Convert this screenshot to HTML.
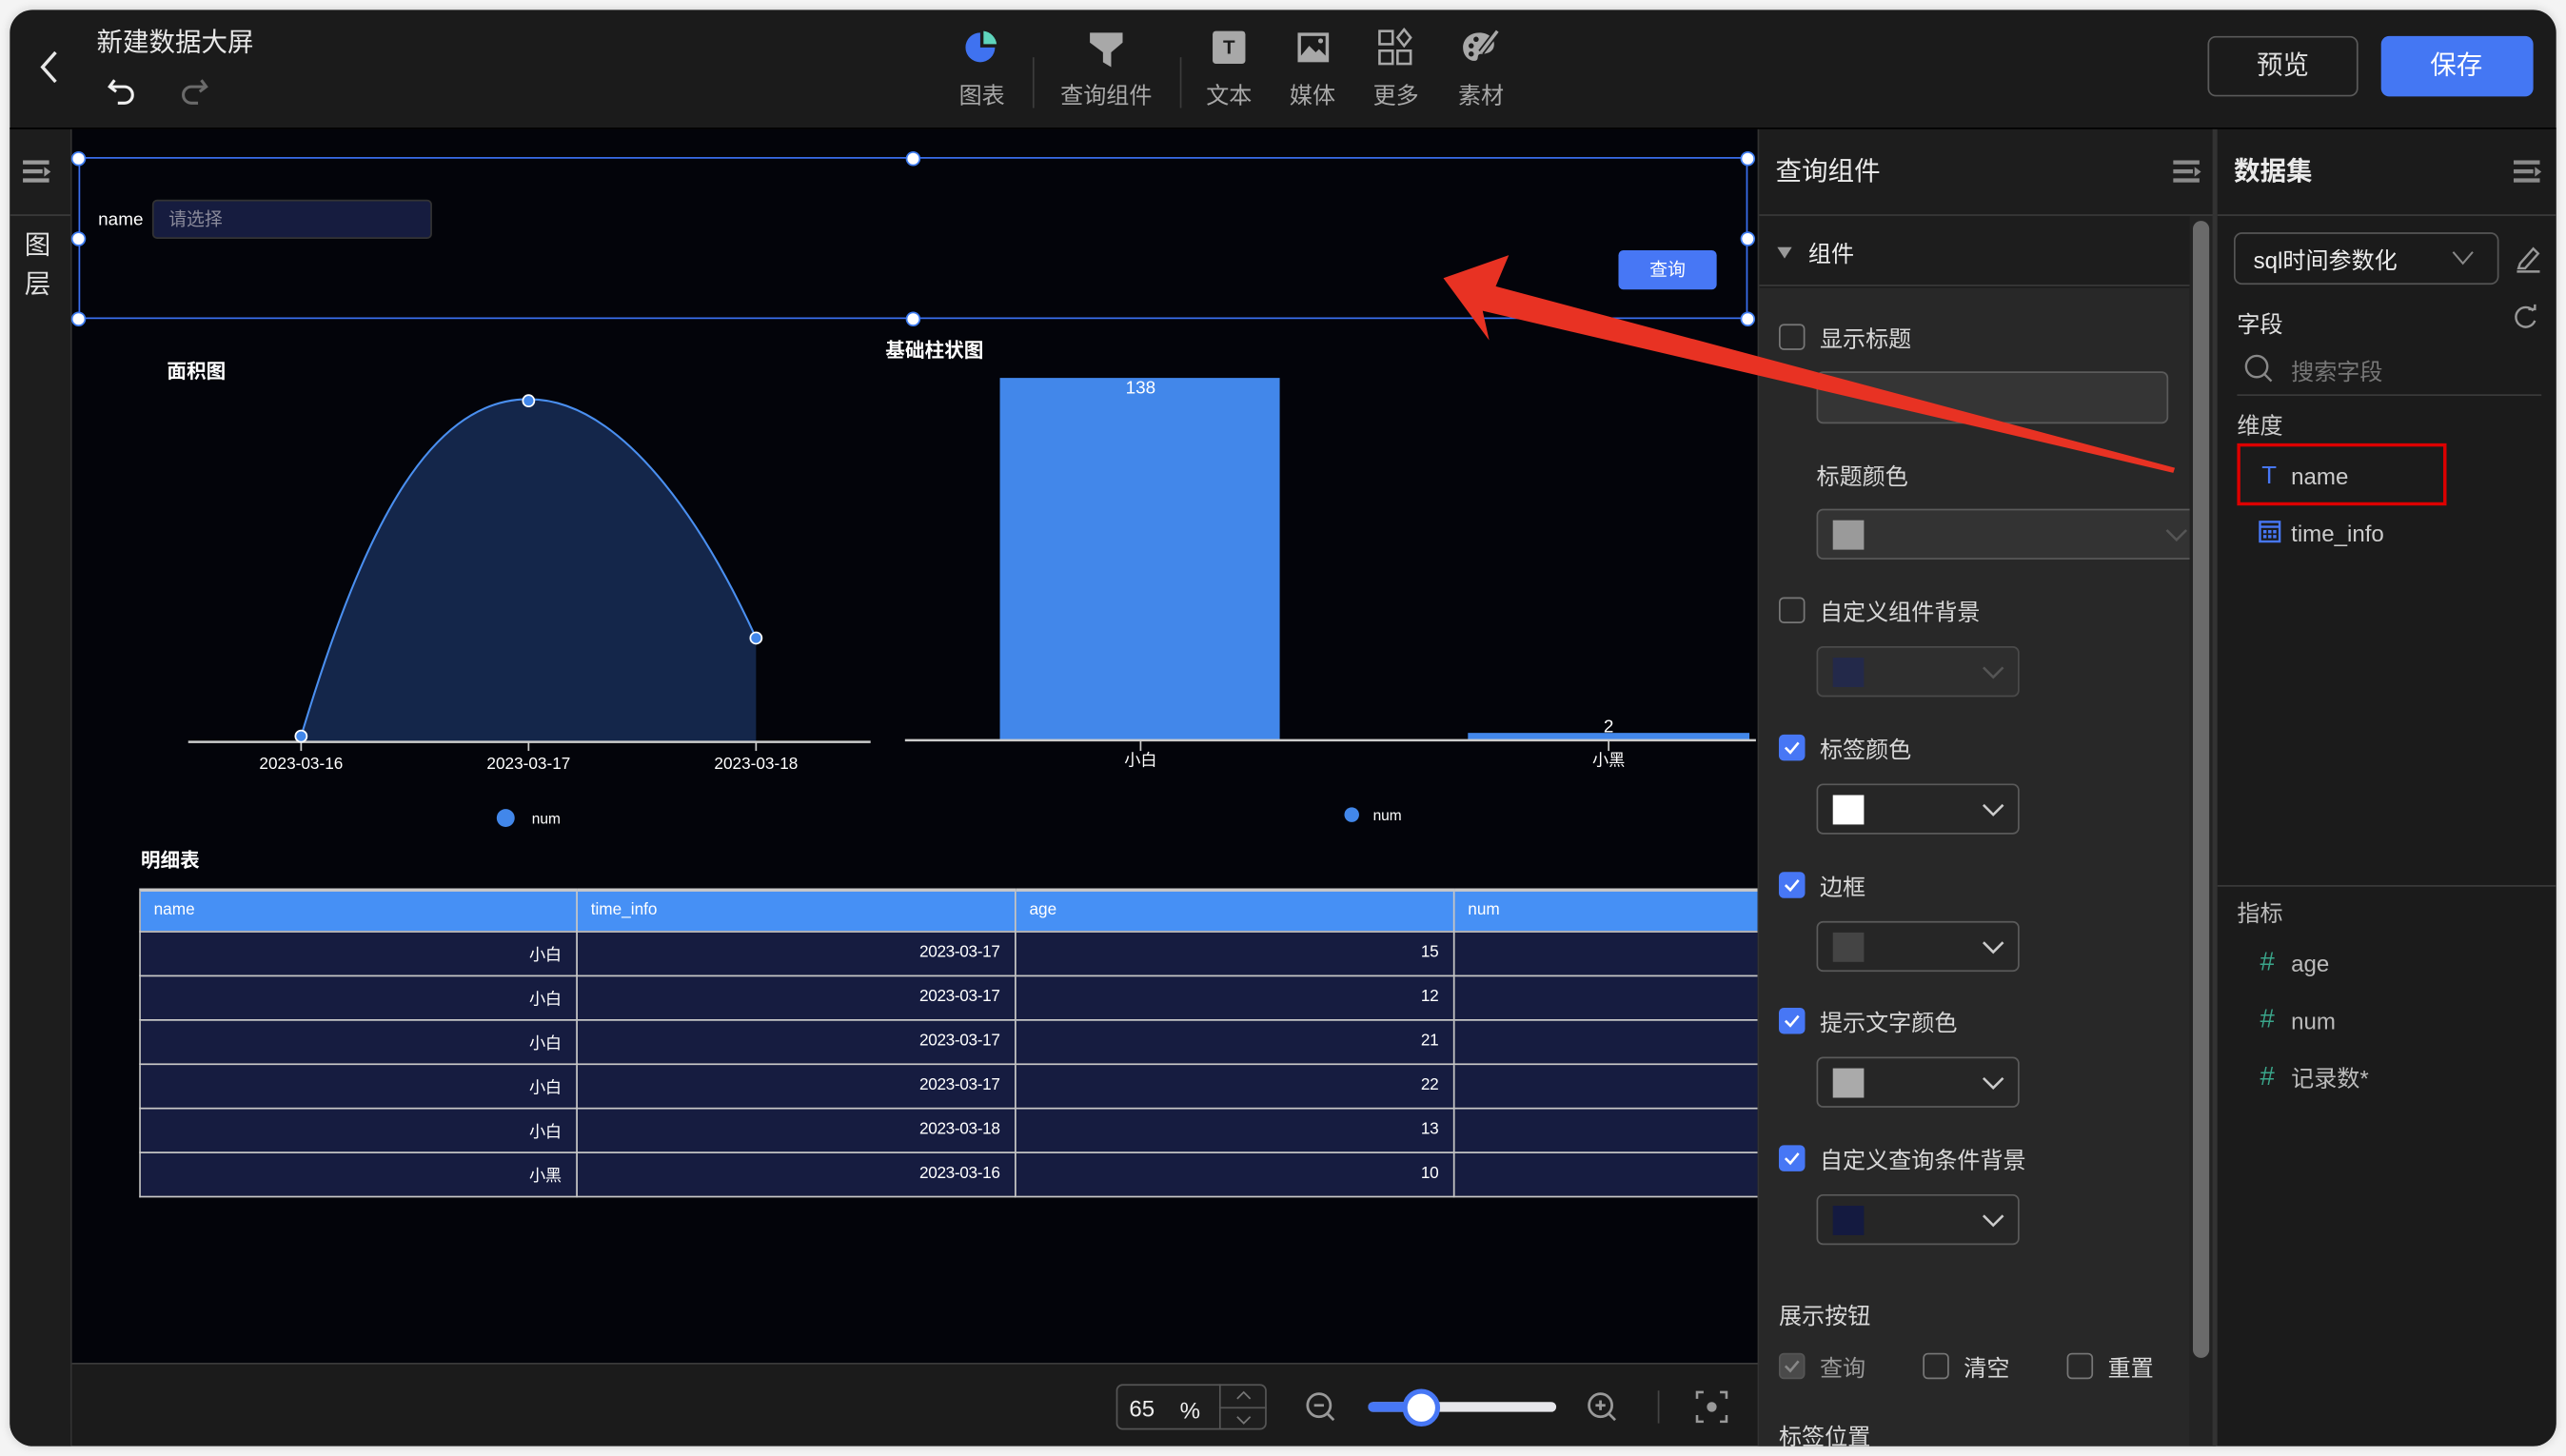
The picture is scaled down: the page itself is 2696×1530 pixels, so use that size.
<!DOCTYPE html>
<html><head><meta charset="utf-8">
<style>
*{margin:0;padding:0;box-sizing:border-box}
html,body{width:2696px;height:1530px;overflow:hidden;background:#f4f4f4}
#s{position:absolute;left:0;top:0;width:1568px;height:890px;transform:scale(1.71939,1.71910);transform-origin:0 0;font-family:"Liberation Sans","Noto Sans CJK SC",sans-serif}
.a{position:absolute}
.t{position:absolute;white-space:nowrap;line-height:1;transform:translateY(calc(-50% + 1px))}
.c{transform:translate(-50%,calc(-50% + 1px))}
.cb{position:absolute;width:16px;height:16px;border:1px solid #777;border-radius:3px}
.ck{background:#4777f5;border-color:#4777f5}
.sel{position:absolute;left:1110px;width:124px;height:31px;border:1px solid #5a5a5a;border-radius:4px;background:#262626}
.sw{position:absolute;left:9px;top:6px;width:19px;height:18px}
.lbl{font-size:14px;color:#d8d8d8}
.h{position:absolute;width:9px;height:9px;border-radius:50%;background:#fff;border:1.5px solid #3d7bf0;transform:translate(-50%,-50%)}
table{border-collapse:collapse}
td{border:1px solid #c8c8c8;height:27px;font-size:10px;color:#fff;text-align:right;padding-right:9px;background:#161c40;letter-spacing:-0.2px}
th{border:1px solid #c8c8c8;border-top:2px solid #c8c8c8;height:25px;font-size:10px;color:#fff;text-align:left;padding-left:8px;background:#4690f5;font-weight:normal}
</style></head><body>
<div id="s">
<div class="a" style="left:6px;top:6px;width:1556px;height:878px;border-radius:14px;background:#1b1b1b;overflow:hidden;box-shadow:0 0 6px rgba(0,0,0,.15)"></div>
<svg class="a" style="left:22px;top:30px" width="16" height="22"><path d="M12 2 L4 11 L12 20" stroke="#e8e8e8" stroke-width="2" fill="none"/></svg>
<div class="t" style="left:59px;top:26px;font-size:16px;color:#e8e8e8">新建数据大屏</div>
<svg class="a" style="left:65px;top:45px" width="20" height="20"><path d="M5 4 L2 8 L6 11 M2 8 H11 a5 5 0 0 1 0 10 H7" stroke="#f0f0f0" stroke-width="1.8" fill="none"/></svg>
<svg class="a" style="left:108px;top:45px" width="20" height="20"><path d="M15 4 L18 8 L14 11 M18 8 H9 a5 5 0 0 0 0 10 H13" stroke="#6a6a6a" stroke-width="1.8" fill="none"/></svg>

<svg class="a" style="left:589px;top:18px" width="22" height="22"><path d="M10 2 A9 9 0 1 0 19 11 L10 11 Z" fill="#3f72f0"/><path d="M12 1 A9 9 0 0 1 20 9 L12 9 Z" fill="#5fd4bc"/></svg>
<div class="t c" style="left:600px;top:57px;font-size:14px;color:#a8a8a8">图表</div>
<div class="a" style="left:631px;top:35px;width:1px;height:31px;background:#3c3c3c"></div>
<svg class="a" style="left:665px;top:18px" width="22" height="24"><path d="M1 2 H21 V8 L14 14 V23 L9 20 V14 L1 8Z" fill="#a8a8a8"/></svg>
<div class="t c" style="left:676px;top:57px;font-size:14px;color:#a8a8a8">查询组件</div>
<div class="a" style="left:721px;top:35px;width:1px;height:31px;background:#3c3c3c"></div>
<div class="a" style="left:741px;top:19px;width:20px;height:20px;background:#a8a8a8;border-radius:2px"></div>
<div class="t c" style="left:751px;top:28px;font-size:12px;color:#1b1b1b;font-weight:bold">T</div>
<div class="t c" style="left:751px;top:57px;font-size:14px;color:#a8a8a8">文本</div>
<svg class="a" style="left:792px;top:19px" width="21" height="20"><rect x="1" y="1" width="19" height="18" fill="#a8a8a8"/><rect x="3" y="3" width="15" height="12" fill="#1b1b1b"/><path d="M3 15 L8 9 L12 13 L14 11 L18 15Z" fill="#a8a8a8"/><circle cx="15" cy="6" r="1.5" fill="#a8a8a8"/></svg>
<div class="t c" style="left:802px;top:57px;font-size:14px;color:#a8a8a8">媒体</div>
<svg class="a" style="left:842px;top:17px" width="22" height="24"><g fill="none" stroke="#a8a8a8" stroke-width="1.5"><rect x="1" y="2" width="8" height="8"/><path d="M16 1 L20 6 L16 11 L12 6Z"/><rect x="1" y="14" width="8" height="8"/><rect x="12" y="14" width="8" height="8"/></g></svg>
<div class="t c" style="left:853px;top:57px;font-size:14px;color:#a8a8a8">更多</div>
<svg class="a" style="left:893px;top:17px" width="24" height="24"><path d="M11 3 C4 3 1 8 1 12 C1 18 6 21 9 20 C11 19 9 16 12 16 C17 16 20 14 20 10 C20 6 16 3 11 3Z" fill="#a8a8a8"/><circle cx="6" cy="11" r="1.6" fill="#1b1b1b"/><circle cx="9" cy="7" r="1.6" fill="#1b1b1b"/><circle cx="6" cy="16" r="1.6" fill="#1b1b1b"/><path d="M22 2 L12 15" stroke="#1b1b1b" stroke-width="4"/><path d="M22 2 L12 15" stroke="#a8a8a8" stroke-width="2"/></svg>
<div class="t c" style="left:905px;top:57px;font-size:14px;color:#a8a8a8">素材</div>

<div class="a" style="left:1349px;top:22px;width:92px;height:37px;border:1px solid #5a5a5a;border-radius:5px"></div>
<div class="t c" style="left:1395px;top:40px;font-size:16px;color:#e0e0e0">预览</div>
<div class="a" style="left:1455px;top:22px;width:93px;height:37px;background:#4477f3;border-radius:5px"></div>
<div class="t c" style="left:1501px;top:40px;font-size:16px;color:#fff">保存</div>

<div class="a" style="left:6px;top:78px;width:38px;height:806px;background:#1d1d1d;border-right:1px solid #333;border-bottom-left-radius:14px"></div>
<div class="a" style="left:6px;top:78px;width:1556px;height:1px;background:#000"></div>
<svg class="a" style="left:13px;top:97px" width="20" height="16"><g fill="#9a9a9a"><rect x="1" y="1" width="16" height="2.5"/><rect x="1" y="6.5" width="12" height="2.5"/><path d="M14 5 L18 8 L14 11Z"/><rect x="1" y="12" width="16" height="2.5"/></g></svg>
<div class="a" style="left:6px;top:131px;width:37px;height:1px;background:#3a3a3a"></div>
<div class="t c" style="left:23px;top:150px;font-size:16px;color:#e0e0e0">图</div>
<div class="t c" style="left:23px;top:174px;font-size:16px;color:#e0e0e0">层</div>

<div class="a" style="left:44px;top:79px;width:1030px;height:754px;background:#03040a"></div>
<div class="a" style="left:48px;top:96px;width:1020px;height:99px;border:1px solid #3a6ff0"></div>
<div class="h" style="left:48px;top:97px"></div><div class="h" style="left:558px;top:97px"></div><div class="h" style="left:1068px;top:97px"></div>
<div class="h" style="left:48px;top:146px"></div><div class="h" style="left:1068px;top:146px"></div>
<div class="h" style="left:48px;top:195px"></div><div class="h" style="left:558px;top:195px"></div><div class="h" style="left:1068px;top:195px"></div>
<div class="t" style="left:60px;top:134px;font-size:11px;color:#fff">name</div>
<div class="a" style="left:93px;top:122px;width:171px;height:24px;background:#161c3f;border:1px solid #333;border-radius:3px"></div>
<div class="t" style="left:103px;top:134px;font-size:11px;color:#8a8a9a">请选择</div>
<div class="a" style="left:989px;top:153px;width:60px;height:24px;background:#4777f5;border-radius:3px"></div>
<div class="t c" style="left:1019px;top:165px;font-size:11px;color:#fff">查询</div>

<div class="t" style="left:102px;top:226px;font-size:12px;color:#fff;font-weight:bold">面积图</div>
<svg class="a" style="left:0;top:0" width="1074" height="520">
<path d="M184 450 C220 330 260 244 323 244 C380 244 430 320 462 390 L462 453 L184 453Z" fill="#14264a"/>
<path d="M184 450 C220 330 260 244 323 244 C380 244 430 320 462 390" fill="none" stroke="#4a8ff0" stroke-width="1.2"/>
<line x1="115" y1="453.5" x2="532" y2="453.5" stroke="#ccc" stroke-width="1.5"/>
<g stroke="#ccc"><line x1="184" y1="454" x2="184" y2="459"/><line x1="323" y1="454" x2="323" y2="459"/><line x1="462" y1="454" x2="462" y2="459"/></g>
<g fill="#4287ea" stroke="#fff" stroke-width="1"><circle cx="184" cy="450" r="3.5"/><circle cx="323" cy="245" r="3.5"/><circle cx="462" cy="390" r="3.5"/></g>
<circle cx="309" cy="500" r="5.5" fill="#4287ea"/>
<rect x="611" y="231" width="171" height="221" fill="#4287ea"/>
<rect x="897" y="448" width="172" height="4" fill="#4287ea"/>
<line x1="553" y1="452.5" x2="1073" y2="452.5" stroke="#ccc" stroke-width="1.5"/>
<g stroke="#ccc"><line x1="697" y1="453" x2="697" y2="459"/><line x1="983" y1="453" x2="983" y2="459"/></g>
<circle cx="826" cy="498" r="4.5" fill="#4287ea"/>
</svg>
<div class="t c" style="left:184px;top:467px;font-size:10px;color:#fff">2023-03-16</div>
<div class="t c" style="left:323px;top:467px;font-size:10px;color:#fff">2023-03-17</div>
<div class="t c" style="left:462px;top:467px;font-size:10px;color:#fff">2023-03-18</div>
<div class="t" style="left:325px;top:500px;font-size:9px;color:#fff">num</div>
<div class="t" style="left:541px;top:213px;font-size:12px;color:#fff;font-weight:bold">基础柱状图</div>
<div class="t c" style="left:697px;top:237px;font-size:11px;color:#fff">138</div>
<div class="t c" style="left:983px;top:444px;font-size:11px;color:#fff">2</div>
<div class="t c" style="left:697px;top:465px;font-size:10px;color:#fff">小白</div>
<div class="t c" style="left:983px;top:465px;font-size:10px;color:#fff">小黑</div>
<div class="t" style="left:839px;top:498px;font-size:9px;color:#fff">num</div>

<div class="t" style="left:86px;top:525px;font-size:12px;color:#fff;font-weight:bold">明细表</div>
<div class="a" style="left:85px;top:543px;width:989px;height:190px;overflow:hidden">
<table style="width:1080px;table-layout:fixed">
<colgroup><col style="width:267px"><col style="width:268px"><col style="width:268px"><col style="width:277px"></colgroup>
<tr><th>name</th><th>time_info</th><th>age</th><th>num</th></tr>
<tr><td>小白</td><td>2023-03-17</td><td>15</td><td></td></tr>
<tr><td>小白</td><td>2023-03-17</td><td>12</td><td></td></tr>
<tr><td>小白</td><td>2023-03-17</td><td>21</td><td></td></tr>
<tr><td>小白</td><td>2023-03-17</td><td>22</td><td></td></tr>
<tr><td>小白</td><td>2023-03-18</td><td>13</td><td></td></tr>
<tr><td>小黑</td><td>2023-03-16</td><td>10</td><td></td></tr>
</table></div>

<div class="a" style="left:44px;top:833px;width:1031px;height:1px;background:#3a3a3a"></div>
<div class="a" style="left:682px;top:846px;width:92px;height:28px;border:1px solid #555;border-radius:4px;background:#1e1e1e"></div>
<div class="a" style="left:745px;top:846px;width:1px;height:28px;background:#555"></div>
<div class="a" style="left:745px;top:860px;width:29px;height:1px;background:#555"></div>
<div class="t" style="left:690px;top:860px;font-size:14px;color:#eee">65</div>
<div class="t" style="left:721px;top:861px;font-size:14px;color:#eee">%</div>
<svg class="a" style="left:746px;top:847px" width="28" height="27"><path d="M10 8 L14 4 L18 8 M10 19 L14 23 L18 19" stroke="#777" fill="none"/></svg>
<svg class="a" style="left:797px;top:850px" width="22" height="22"><circle cx="9" cy="9" r="7" stroke="#999" stroke-width="1.6" fill="none"/><path d="M6 9 H12" stroke="#999" stroke-width="1.6"/><path d="M14 14 L18 18" stroke="#999" stroke-width="1.6"/></svg>
<div class="a" style="left:836px;top:857px;width:115px;height:6px;border-radius:3px;background:#e6e6ea"></div>
<div class="a" style="left:836px;top:857px;width:32px;height:6px;border-radius:3px;background:#4777f5"></div>
<div class="a" style="left:857px;top:849px;width:23px;height:23px;border-radius:50%;background:#fff;border:3px solid #4777f5"></div>
<svg class="a" style="left:969px;top:850px" width="22" height="22"><circle cx="9" cy="9" r="7" stroke="#999" stroke-width="1.6" fill="none"/><path d="M6 9 H12 M9 6 V12" stroke="#999" stroke-width="1.6"/><path d="M14 14 L18 18" stroke="#999" stroke-width="1.6"/></svg>
<div class="a" style="left:1013px;top:850px;width:1px;height:20px;background:#444"></div>
<svg class="a" style="left:1036px;top:850px" width="20" height="20"><path d="M1 5 V1 H5 M15 1 H19 V5 M19 15 V19 H15 M5 19 H1 V15" stroke="#999" stroke-width="1.5" fill="none"/><circle cx="10" cy="10" r="3" fill="#999"/></svg>

<div class="a" style="left:1074px;top:79px;width:1px;height:805px;background:#333"></div>
<div class="a" style="left:1075px;top:79px;width:278px;height:52px;background:#1d1d1d"></div>
<div class="t" style="left:1085px;top:105px;font-size:16px;color:#eaeaea">查询组件</div>
<svg class="a" style="left:1327px;top:97px" width="20" height="16"><g fill="#8a8a8a"><rect x="1" y="1" width="16" height="2.5"/><rect x="1" y="6.5" width="12" height="2.5"/><path d="M14 5 L18 8 L14 11Z"/><rect x="1" y="12" width="16" height="2.5"/></g></svg>
<div class="a" style="left:1075px;top:131px;width:280px;height:1px;background:#3a3a3a"></div>
<div class="a" style="left:1075px;top:132px;width:263px;height:43px;background:#1d1d1d;border-bottom:1px solid #3a3a3a"></div>
<svg class="a" style="left:1086px;top:151px" width="10" height="8"><path d="M0 0 H9 L4.5 7Z" fill="#999"/></svg>
<div class="t" style="left:1105px;top:154px;font-size:14px;color:#eee">组件</div>
<div class="a" style="left:1075px;top:176px;width:263px;height:708px;background:#282828"></div>

<div class="cb" style="left:1087px;top:198px"></div>
<div class="t lbl" style="left:1112px;top:206px">显示标题</div>
<div class="a" style="left:1110px;top:227px;width:215px;height:32px;background:#353535;border:1px solid #5a5a5a;border-radius:4px"></div>
<div class="t lbl" style="left:1110px;top:290px">标题颜色</div>
<div class="sel" style="top:311px;width:240px;background:#333"><div class="sw" style="background:#9a9a9a"></div><svg class="a" style="left:212px;top:10px" width="14" height="10"><path d="M1 2 L7 8 L13 2" stroke="#555" fill="none" stroke-width="1.5"/></svg></div>
<div class="a" style="left:1338px;top:132px;width:16px;height:752px;background:#232323"></div>
<div class="a" style="left:1340px;top:135px;width:10px;height:695px;background:#6a6a6a;border-radius:5px"></div>
<div class="a" style="left:1352px;top:79px;width:3px;height:805px;background:#333"></div>
<div class="cb" style="left:1087px;top:365px"></div>
<div class="t lbl" style="left:1112px;top:373px">自定义组件背景</div>
<div class="sel" style="top:395px;background:#2e2e2e;border-color:#4a4a4a"><div class="sw" style="background:#23294a"></div><svg class="a" style="left:100px;top:10px" width="14" height="10"><path d="M1 2 L7 8 L13 2" stroke="#555" fill="none" stroke-width="1.5"/></svg></div>
<div class="cb ck" style="left:1087px;top:449px"></div>
<svg class="a" style="left:1087px;top:449px" width="16" height="16"><path d="M4 8 L7 11 L12 5" stroke="#fff" stroke-width="1.5" fill="none"/></svg>
<div class="t lbl" style="left:1112px;top:457px">标签颜色</div>
<div class="sel" style="top:479px"><div class="sw" style="background:#fff"></div><svg class="a" style="left:100px;top:10px" width="14" height="10"><path d="M1 2 L7 8 L13 2" stroke="#ccc" fill="none" stroke-width="1.5"/></svg></div>
<div class="cb ck" style="left:1087px;top:533px"></div>
<svg class="a" style="left:1087px;top:533px" width="16" height="16"><path d="M4 8 L7 11 L12 5" stroke="#fff" stroke-width="1.5" fill="none"/></svg>
<div class="t lbl" style="left:1112px;top:541px">边框</div>
<div class="sel" style="top:563px"><div class="sw" style="background:#444"></div><svg class="a" style="left:100px;top:10px" width="14" height="10"><path d="M1 2 L7 8 L13 2" stroke="#ccc" fill="none" stroke-width="1.5"/></svg></div>
<div class="cb ck" style="left:1087px;top:616px"></div>
<svg class="a" style="left:1087px;top:616px" width="16" height="16"><path d="M4 8 L7 11 L12 5" stroke="#fff" stroke-width="1.5" fill="none"/></svg>
<div class="t lbl" style="left:1112px;top:624px">提示文字颜色</div>
<div class="sel" style="top:646px"><div class="sw" style="background:#aaa"></div><svg class="a" style="left:100px;top:10px" width="14" height="10"><path d="M1 2 L7 8 L13 2" stroke="#ccc" fill="none" stroke-width="1.5"/></svg></div>
<div class="cb ck" style="left:1087px;top:700px"></div>
<svg class="a" style="left:1087px;top:700px" width="16" height="16"><path d="M4 8 L7 11 L12 5" stroke="#fff" stroke-width="1.5" fill="none"/></svg>
<div class="t lbl" style="left:1112px;top:708px">自定义查询条件背景</div>
<div class="sel" style="top:730px"><div class="sw" style="background:#141a40"></div><svg class="a" style="left:100px;top:10px" width="14" height="10"><path d="M1 2 L7 8 L13 2" stroke="#ccc" fill="none" stroke-width="1.5"/></svg></div>
<div class="t lbl" style="left:1087px;top:803px">展示按钮</div>
<div class="cb" style="left:1087px;top:827px;background:#4a4a4a;border-color:#555"></div>
<svg class="a" style="left:1087px;top:827px" width="16" height="16"><path d="M4 8 L7 11 L12 5" stroke="#888" stroke-width="1.5" fill="none"/></svg>
<div class="t lbl" style="left:1112px;top:835px;color:#999">查询</div>
<div class="cb" style="left:1175px;top:827px"></div>
<div class="t lbl" style="left:1200px;top:835px">清空</div>
<div class="cb" style="left:1263px;top:827px"></div>
<div class="t lbl" style="left:1288px;top:835px">重置</div>
<div class="t lbl" style="left:1087px;top:877px">标签位置</div>

<div class="a" style="left:1355px;top:79px;width:207px;height:805px;background:#1b1b1b;border-bottom-right-radius:14px"></div>
<div class="t" style="left:1365px;top:105px;font-size:16px;color:#eaeaea;font-weight:bold">数据集</div>
<svg class="a" style="left:1535px;top:97px" width="20" height="16"><g fill="#8a8a8a"><rect x="1" y="1" width="16" height="2.5"/><rect x="1" y="6.5" width="12" height="2.5"/><path d="M14 5 L18 8 L14 11Z"/><rect x="1" y="12" width="16" height="2.5"/></g></svg>
<div class="a" style="left:1355px;top:131px;width:207px;height:1px;background:#3a3a3a"></div>
<div class="a" style="left:1365px;top:142px;width:162px;height:32px;border:1px solid #555;border-radius:5px"></div>
<div class="t" style="left:1377px;top:158px;font-size:14px;color:#eee">sql时间参数化</div>
<svg class="a" style="left:1498px;top:153px" width="14" height="10"><path d="M1 1 L7 8 L13 1" stroke="#888" fill="none" stroke-width="1.2"/></svg>
<svg class="a" style="left:1536px;top:149px" width="18" height="18"><path d="M4 12 L12 3 L15 6 L7 15 L3 15Z" stroke="#999" stroke-width="1.4" fill="none"/><path d="M2 17 H16" stroke="#999" stroke-width="1.4"/></svg>
<div class="t" style="left:1367px;top:197px;font-size:14px;color:#e0e0e0">字段</div>
<svg class="a" style="left:1535px;top:186px" width="17" height="17"><path d="M13 4 A6 6 0 1 0 14 10" stroke="#999" stroke-width="1.4" fill="none"/><path d="M10 3 H14 V0" stroke="#999" stroke-width="1.4" fill="none"/></svg>
<svg class="a" style="left:1371px;top:216px" width="20" height="20"><circle cx="8" cy="8" r="6.5" stroke="#888" stroke-width="1.4" fill="none"/><path d="M13 13 L17 17" stroke="#888" stroke-width="1.4"/></svg>
<div class="t" style="left:1400px;top:226px;font-size:14px;color:#777">搜索字段</div>
<div class="a" style="left:1367px;top:241px;width:186px;height:1px;background:#3a3a3a"></div>
<div class="t" style="left:1367px;top:259px;font-size:14px;color:#ccc">维度</div>
<div class="a" style="left:1367px;top:271px;width:128px;height:38px;border:2px solid #d00"></div>
<div class="t" style="left:1382px;top:290px;font-size:15px;color:#4777f5">T</div>
<div class="t" style="left:1400px;top:290px;font-size:14px;color:#ccc">name</div>
<svg class="a" style="left:1380px;top:317px" width="14" height="15"><rect x="1" y="2" width="12" height="12" stroke="#4777f5" stroke-width="1.4" fill="none"/><path d="M1 5 H13" stroke="#4777f5" stroke-width="1.4"/><g fill="#4777f5"><rect x="3" y="7" width="2" height="2"/><rect x="6" y="7" width="2" height="2"/><rect x="9" y="7" width="2" height="2"/><rect x="3" y="10" width="2" height="2"/><rect x="6" y="10" width="2" height="2"/><rect x="9" y="10" width="2" height="2"/></g></svg>
<div class="t" style="left:1400px;top:325px;font-size:14px;color:#ccc">time_info</div>
<div class="a" style="left:1355px;top:541px;width:207px;height:1px;background:#3a3a3a"></div>
<div class="t" style="left:1367px;top:557px;font-size:14px;color:#bbb">指标</div>
<div class="t" style="left:1381px;top:588px;font-size:16px;color:#3aa58a">#</div>
<div class="t" style="left:1400px;top:588px;font-size:14px;color:#bbb">age</div>
<div class="t" style="left:1381px;top:623px;font-size:16px;color:#3aa58a">#</div>
<div class="t" style="left:1400px;top:623px;font-size:14px;color:#bbb">num</div>
<div class="t" style="left:1381px;top:658px;font-size:16px;color:#3aa58a">#</div>
<div class="t" style="left:1400px;top:658px;font-size:14px;color:#bbb">记录数*</div>

<svg class="a" style="left:0;top:0" width="1568" height="890"><path d="M882 170 L922 156 L914 175 L1329 286 L1328 289 L906 190 L910 208Z" fill="#e83223"/></svg>
</div>
</body></html>
